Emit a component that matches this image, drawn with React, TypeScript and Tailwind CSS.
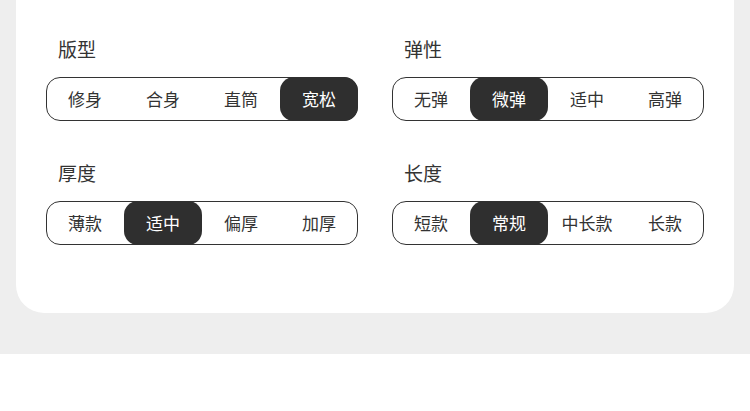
import React from "react";

const groups = [
  { title: "版型", options: ["修身", "合身", "直筒", "宽松"], selected: 3 },
  { title: "弹性", options: ["无弹", "微弹", "适中", "高弹"], selected: 1 },
  { title: "厚度", options: ["薄款", "适中", "偏厚", "加厚"], selected: 1 },
  { title: "长度", options: ["短款", "常规", "中长款", "长款"], selected: 1 },
];

function Segmented({ options, selected }: { options: string[]; selected: number }) {
  return (
    <div className="flex h-[44px] rounded-[14px] border border-[#333]">
      {options.map((o, i) => (
        <div
          key={o}
          className={`-my-px flex flex-1 items-center justify-center rounded-[14px] pb-px text-[17px] first:-ml-px last:-mr-px ${
            i === selected ? "bg-[#2f2f2f] text-white" : "text-[#333]"
          }`}
        >
          {o}
        </div>
      ))}
    </div>
  );
}

export default function App() {
  return (
    <div
      className="min-h-[411px] bg-white"
      style={{ fontFamily: '"Noto Sans CJK SC", "Noto Sans", sans-serif' }}
    >
      <div className="h-[354px] bg-[#eeeeee] px-4">
        <div className="h-[313px] rounded-b-[28px] bg-white px-[30px] pt-[37px]">
          <div className="grid grid-cols-2 gap-x-[34px] gap-y-[40px]">
            {groups.map((g) => (
              <div key={g.title} className="flex flex-col">
                <div className="mb-[16px] pl-3 text-[19px] leading-[24px] text-[#333]">
                  {g.title}
                </div>
                <Segmented options={g.options} selected={g.selected} />
              </div>
            ))}
          </div>
        </div>
      </div>
    </div>
  );
}
